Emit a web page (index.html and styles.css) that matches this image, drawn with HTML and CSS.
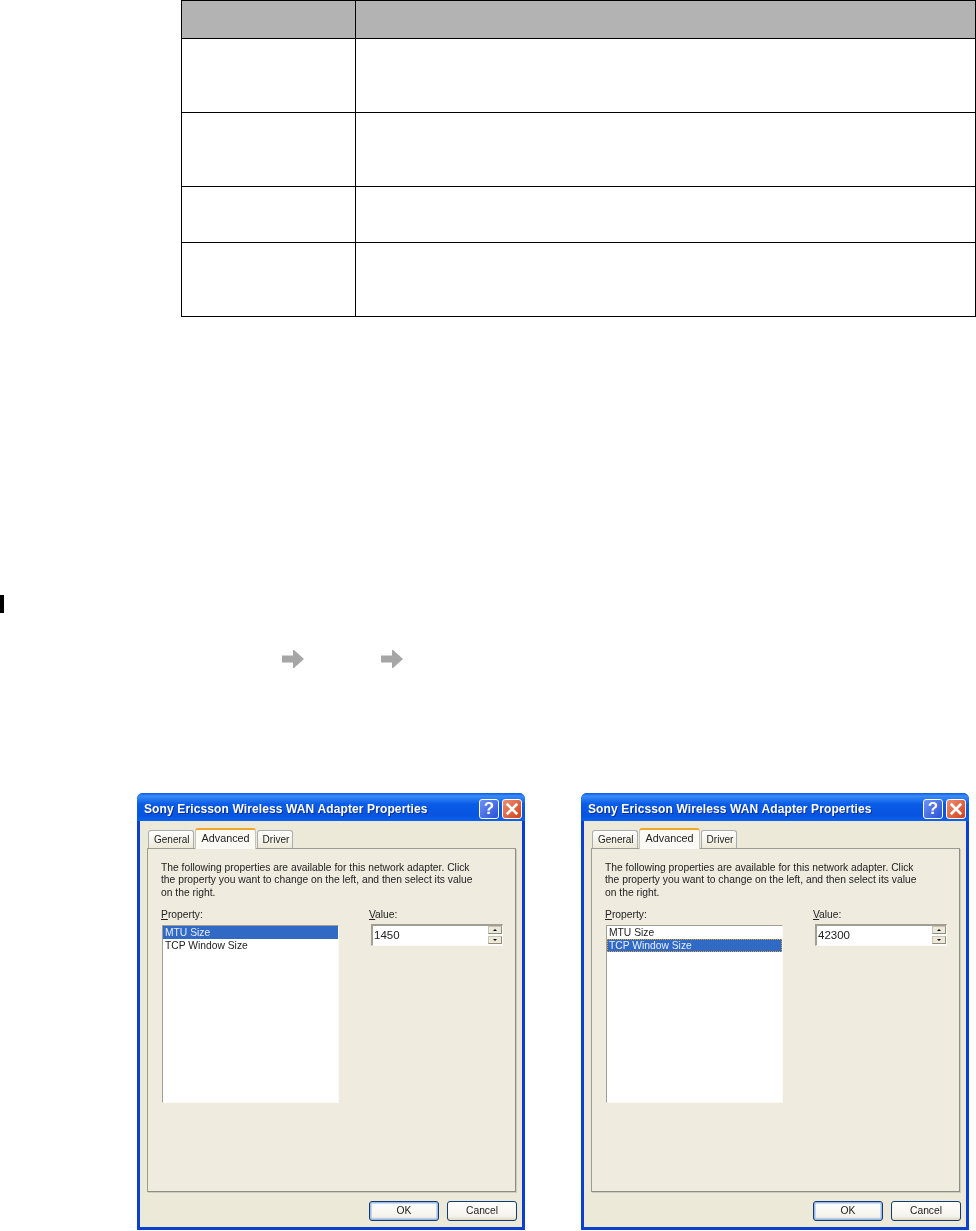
FILE: index.html
```html
<!DOCTYPE html>
<html lang="en">
<head>
<meta charset="utf-8">
<title>Adapter properties</title>
<link rel="stylesheet" href="styles.css">
</head>
<body>
<table class="spec">
  <tr class="head"><th class="c1"></th><th></th></tr>
  <tr class="tall"><td></td><td></td></tr>
  <tr class="tall"><td></td><td></td></tr>
  <tr class="short"><td></td><td></td></tr>
  <tr class="tall"><td></td><td></td></tr>
</table>
<div class="marker"></div>
<div class="arrows">
  <svg class="arrow" viewBox="0 0 22 18"><path d="M0 5.500h11V0h1l10 9-10 9h-1v-5.500H0z"/></svg>
  <svg class="arrow" viewBox="0 0 22 18"><path d="M0 5.500h11V0h1l10 9-10 9h-1v-5.500H0z"/></svg>
</div>
<div class="shots">
  <section class="dialog">
    <header class="title">
      <span class="title-text">Sony Ericsson Wireless WAN Adapter Properties</span>
      <span class="tbtn help">?</span>
      <span class="tbtn close"><svg viewBox="0 0 12 12"><path d="M1.500 1.500l9 9M10.500 1.500l-9 9"/></svg></span>
    </header>
    <div class="body">
      <div class="tabs">
        <span class="tab">General</span>
        <span class="tab active">Advanced</span>
        <span class="tab">Driver</span>
      </div>
      <div class="panel">
        <p class="intro">The following properties are available for this network adapter. Click<br>the property you want to change on the left, and then select its value<br>on the right.</p>
        <div class="fields">
          <div class="prop">
            <div class="label"><u>P</u>roperty:</div>
            <div class="list">
              <div class="item selected">MTU Size</div>
              <div class="item">TCP Window Size</div>
            </div>
          </div>
          <div class="val">
            <div class="label"><u>V</u>alue:</div>
            <div class="input">
              <span class="num">1450</span>
              <span class="spin"><i class="up"></i><i class="down"></i></span>
            </div>
          </div>
        </div>
      </div>
      <div class="buttons">
        <span class="btn default">OK</span>
        <span class="btn">Cancel</span>
      </div>
    </div>
  </section>
  <section class="dialog">
    <header class="title">
      <span class="title-text">Sony Ericsson Wireless WAN Adapter Properties</span>
      <span class="tbtn help">?</span>
      <span class="tbtn close"><svg viewBox="0 0 12 12"><path d="M1.500 1.500l9 9M10.500 1.500l-9 9"/></svg></span>
    </header>
    <div class="body">
      <div class="tabs">
        <span class="tab">General</span>
        <span class="tab active">Advanced</span>
        <span class="tab">Driver</span>
      </div>
      <div class="panel">
        <p class="intro">The following properties are available for this network adapter. Click<br>the property you want to change on the left, and then select its value<br>on the right.</p>
        <div class="fields">
          <div class="prop">
            <div class="label"><u>P</u>roperty:</div>
            <div class="list">
              <div class="item">MTU Size</div>
              <div class="item selected focus">TCP Window Size</div>
            </div>
          </div>
          <div class="val">
            <div class="label"><u>V</u>alue:</div>
            <div class="input">
              <span class="num">42300</span>
              <span class="spin"><i class="up"></i><i class="down"></i></span>
            </div>
          </div>
        </div>
      </div>
      <div class="buttons">
        <span class="btn default">OK</span>
        <span class="btn">Cancel</span>
      </div>
    </div>
  </section>
</div>
</body>
</html>
```
FILE: styles.css
```css
* { box-sizing: border-box; }
html, body { margin: 0; padding: 0; background: #fff; }
body { width: 976px; height: 1231px; overflow: hidden; font-family: "Liberation Sans", Arial, sans-serif; }

.spec { border-collapse: collapse; margin-left: 181px; width: 795px; table-layout: fixed; }
.spec th, .spec td { border: 1px solid #000; padding: 0; }
.spec .c1 { width: 174px; }
.head th { background: #b3b3b3; height: 38px; }
.tall td { height: 74px; }
.short td { height: 56px; }

.marker { width: 4px; height: 18px; background: #000; margin-top: 278px; }

.arrows { display: flex; gap: 77px; margin: 37px 0 0 282px; }
.arrow { width: 22px; height: 18px; fill: #a6a6a6; display: block; filter: blur(.4px); }

.shots { display: flex; gap: 56px; margin: 125px 0 0 137px; }
.dialog { width: 388px; height: 437px; display: flex; flex-direction: column; background: #0a3fd0; border-radius: 6px 6px 0 0; overflow: hidden; filter: blur(.3px); }
.title { height: 28px; flex: none; display: flex; align-items: center; padding: 3px 3px 0 7px; background: linear-gradient(#0a5ae8 0, #3a8cf8 3px, #0a5ce6 11px, #0754e0 22px, #0c62ee 28px); }
.title-text { flex: 1; color: #fff; font: bold 12px "Liberation Sans", Arial, sans-serif; letter-spacing: .12px; white-space: nowrap; text-shadow: 1px 1px 0 #0a2f9a; }
.tbtn { width: 20px; height: 20px; border: 1px solid #fff; border-radius: 3px; display: flex; align-items: center; justify-content: center; color: #fff; }
.help { background: linear-gradient(135deg, #6f93f0, #2a50d8); font: bold 17px "Liberation Sans", Arial, sans-serif; }
.close { margin-left: 3px; background: linear-gradient(135deg, #ec8f72, #d4401a); }
.close svg { width: 14px; height: 14px; fill: none; stroke: #fff; stroke-width: 2.200; }

.body { flex: 1; margin: 0 3px 3px; background: #ece9d8; padding: 7px 6px 0 7px; display: flex; flex-direction: column; font-size: 10.300px; color: #222; }
.tabs { display: flex; align-items: flex-end; height: 20px; padding-left: 1px; position: relative; z-index: 1; }
.tab { height: 18px; padding: 0 3px 0 5px; line-height: 18px; background: linear-gradient(#fff, #ece9d8); border: 1px solid #a8aeb4; border-bottom: 0; border-radius: 3px 3px 0 0; white-space: nowrap; font-size: 10px; }
.tab.active { height: 21px; line-height: 16px; font-size: 10.800px; background: #fbfaf5; border: 1px solid #c8c6b8; border-top: 2px solid #f0a52c; border-bottom: 0; margin: 0 1px -1px; padding: 0 5px 0 6px; }
.panel { height: 344px; flex: none; background: #efebdf; border: 1px solid #9a9d94; border-right-color: #8b8d85; border-bottom-color: #8b8d85; box-shadow: 1px 1px 0 #d0cdbc; padding: 13px 13px 0; }
.intro { margin: 0; line-height: 12.400px; white-space: nowrap; }
.fields { display: flex; margin-top: 10px; }
.prop { width: 208px; flex: none; }
.val { width: 134px; }
.label { height: 13px; line-height: 12px; }
.list { width: 177px; height: 178px; margin: 3px 0 0 1px; background: #fff; border: 1px solid #fbfaf5; border-top-color: #a09f92; border-left-color: #a09f92; }
.item { height: 13px; line-height: 13px; padding-left: 2px; white-space: nowrap; }
.item.selected { background: #316ac5; color: #e8edf8; }
.item.focus { outline: 1px dotted #e0a030; outline-offset: -1px; }
.input { width: 132px; height: 22px; margin: 2px 0 0 2px; background: #fff; border: 2px solid #a09f92; border-right: 1px solid #fbfaf5; border-bottom: 1px solid #fbfaf5; display: flex; align-items: center; justify-content: space-between; padding: 0 0 1px 1px; font-size: 11.500px; }
.spin { width: 14px; display: flex; flex-direction: column; gap: 2px; }
.spin i { height: 8px; background: #ece9d8; border: 1px solid #c8c5b4; border-right-color: #8d8d80; border-bottom-color: #8d8d80; position: relative; display: block; }
.spin i::after { content: ""; position: absolute; left: 4px; top: 2px; border: 2px solid transparent; }
.spin .up::after { border-bottom-color: #000; border-top-width: 0; }
.spin .down::after { border-top-color: #000; border-bottom-width: 0; }

.buttons { display: flex; justify-content: flex-end; gap: 8px; margin: 9px -1px 0 0; }
.btn { width: 70px; height: 20px; line-height: 18px; text-align: center; border: 1px solid #0f3a72; border-radius: 3px; background: linear-gradient(#fff, #f4f2ea 80%, #dcd8c8); font-size: 10.300px; }
.btn.default { box-shadow: inset 0 0 0 1.500px #9ab9ea; }
```
